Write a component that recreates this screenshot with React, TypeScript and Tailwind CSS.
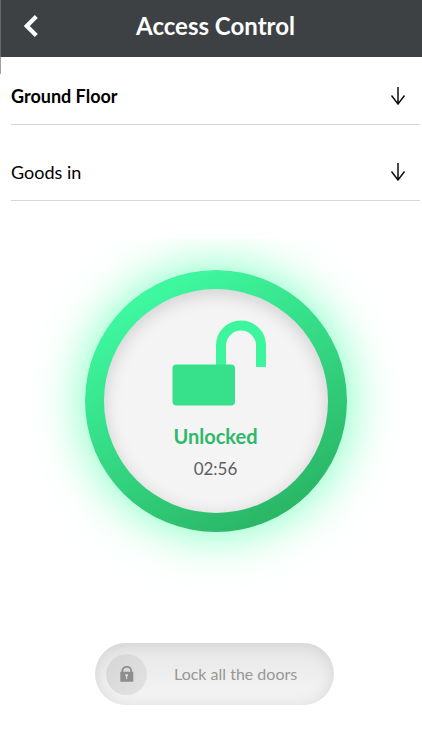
interface PickerProps {
  id: string;
  label: string;
  options: string[];
  className: string;
}

function ArrowDown() {
  return (
    <svg
      viewBox="0 0 16 18"
      className="pointer-events-none absolute right-[14px] bottom-[19px] h-[18px] w-4"
      fill="none"
      stroke="#111"
      strokeWidth="1.5"
      aria-hidden="true"
    >
      <path d="M8 0v17M1.5 8.5l6.5 8.5 6.5-8.5" />
    </svg>
  );
}

function Picker({ id, label, options, className }: PickerProps) {
  return (
    <div className="relative border-b border-[#d6d6d6]">
      <select
        id={id}
        aria-label={label}
        className={`block w-full appearance-none bg-transparent pb-[14px] leading-7 text-black outline-none ${className}`}
      >
        {options.map((o) => (
          <option key={o}>{o}</option>
        ))}
      </select>
      <ArrowDown />
    </div>
  );
}

function UnlockedIcon() {
  return (
    <svg viewBox="-8 0 102 86" className="h-[86px] w-[102px]" aria-hidden="true">
      <path d="M48 45V25.5a20 20 0 0 1 40 0V47" fill="none" stroke="#3df59d" strokeWidth="10" />
      <rect x="-0.5" y="44.5" width="62.5" height="41" rx="4" fill="#37e08b" />
    </svg>
  );
}

function PadlockIcon() {
  return (
    <svg viewBox="0 0 14 16" className="h-4 w-[14px]" aria-hidden="true">
      <path d="M2.4 7V5a4.4 4.2 0 0 1 8.8 0v2" fill="none" stroke="#8e8e8e" strokeWidth="1.9" />
      <rect x="0.3" y="5.8" width="13" height="9.9" rx="0.3" fill="#8e8e8e" />
      <path d="M5.4 8.3h2.4v1.9h-.6V13h-1v-2.8h-.8z" fill="#e4e4e4" />
    </svg>
  );
}

export default function App() {
  return (
    <div className="min-h-screen bg-white font-['Lato',sans-serif]">
      <header className="relative bg-[#3e4144] pr-[2px] pl-[11px]">
        <div className="grid h-[57px] grid-cols-[40px_1fr_40px] items-center pb-[6px]">
          <button type="button" aria-label="Back" className="flex h-10 items-center pl-[13px]">
            <svg viewBox="0 0 14 22" className="h-[22px] w-[14px]" aria-hidden="true">
              <path d="M12.3 1.5 2.8 11l9.5 9.5" fill="none" stroke="#fff" strokeWidth="4.2" />
            </svg>
          </button>
          <h1 className="text-center text-2xl font-bold text-white">Access Control</h1>
        </div>
        <span className="absolute top-0 left-0 h-[74px] w-px bg-[#77797b]/70" />
      </header>

      <main className="pr-[2px] pl-[11px]">
        <Picker
          id="floor"
          label="Floor"
          options={["Ground Floor", "First Floor"]}
          className="pt-[25px] text-lg font-bold"
        />
        <Picker id="door" label="Door" options={["Goods in", "Reception"]} className="pt-[33px] text-lg" />

        <section className="mt-[38px] flex justify-center overflow-hidden pt-[31px] pb-[60px]">
          <div className="rounded-full bg-linear-[150deg] from-[#3ef89f] from-15% to-[#29b363] to-90% p-[19px] shadow-[0_0_50px_#4dffaacc]">
            <div
              role="status"
              className="flex size-[224px] flex-col items-center rounded-full bg-[#f4f4f4] pt-[31px] shadow-[inset_0_4px_18px_#00000028]"
            >
              <UnlockedIcon />
              <p className="mt-[18px] text-xl leading-6 font-bold text-[#2fb86a]">Unlocked</p>
              <p className="mt-[9px] text-[17px] leading-6 text-[#606060]">02:56</p>
            </div>
          </div>
        </section>

        <div className="flex justify-center pt-[51px] pr-[2px] pb-[44px]">
          <button
            type="button"
            className="flex h-[62px] w-[239px] items-center rounded-full bg-linear-to-b from-[#e6e6e6] to-[#f6f6f6] pl-[11px] shadow-[inset_0_0_16px_#0000001c]"
          >
            <span className="flex size-[41px] items-center justify-center rounded-full bg-linear-to-br from-[#d6d6d6] to-[#e2e2e2]">
              <PadlockIcon />
            </span>
            <span className="ml-[27px] text-base text-[#979797]">Lock all the doors</span>
          </button>
        </div>
      </main>
    </div>
  );
}
